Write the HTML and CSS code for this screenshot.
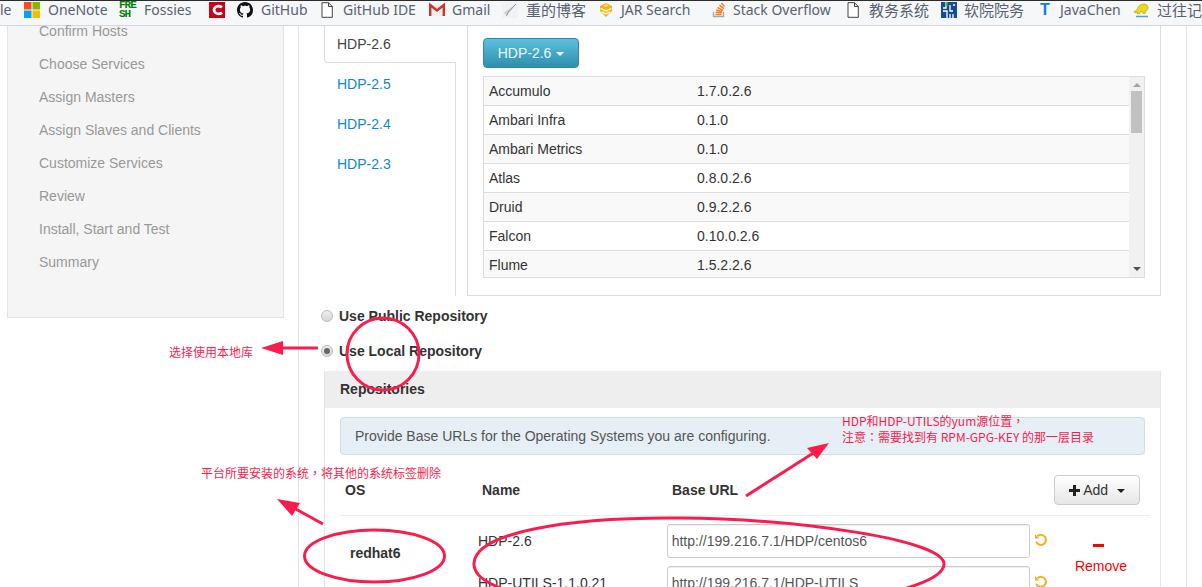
FILE: index.html
```html
<!DOCTYPE html>
<html lang="en">
<head>
    <meta name="viewport" content="width=device-width">
    <title>Select Version</title>
    <link rel="stylesheet" href="styles.css">
</head>

<body>
    <div class="bookmarks">
        <span class="mark first">le</span>
        <span class="mark m-onenote">
            <svg class="ico" viewBox="0 0 16 16"><rect width="7.5" height="7.5" fill="#f25022"/><rect x="8.5" width="7.5" height="7.5" fill="#7fba00"/><rect y="8.5" width="7.5" height="7.5" fill="#00a4ef"/><rect x="8.5" y="8.5" width="7.5" height="7.5" fill="#ffb900"/></svg>
            OneNote
        </span>
        <span class="mark m-fossies"><span class="fresh">FRE<br>SH</span>Fossies</span>
        <span class="mark m-github">
            <svg class="ico" viewBox="0 0 16 16"><rect width="16" height="16" fill="#cc0018"/><path d="M13 5.400A4.600 3.800 0 1 0 13 10.600" fill="none" stroke="#fff" stroke-width="2.800"/></svg>
            <svg class="ico" viewBox="0 0 16 16"><path d="M8 0C3.58 0 0 3.58 0 8c0 3.54 2.29 6.53 5.47 7.59.4.07.55-.17.55-.38 0-.19-.01-.82-.01-1.49-2.01.37-2.53-.49-2.69-.94-.09-.23-.48-.94-.82-1.13-.28-.15-.68-.52-.01-.53.63-.01 1.08.58 1.23.82.72 1.21 1.87.87 2.33.66.07-.52.28-.87.51-1.07-1.78-.2-3.64-.89-3.64-3.95 0-.87.31-1.59.82-2.15-.08-.2-.36-1.02.08-2.12 0 0 .67-.21 2.2.82.64-.18 1.32-.27 2-.27s1.36.09 2 .27c1.53-1.04 2.2-.82 2.2-.82.44 1.1.16 1.92.08 2.12.51.56.82 1.27.82 2.15 0 3.07-1.87 3.75-3.65 3.95.29.25.54.73.54 1.48 0 1.07-.01 1.93-.01 2.2 0 .21.15.46.55.38A8.01 8.01 0 0 0 16 8c0-4.42-3.58-8-8-8z" fill="#111"/></svg>
            GitHub
        </span>
        <span class="mark m-ide">
            <svg class="ico doc" viewBox="0 0 12 16"><path d="M1 .7h6.5L11.3 4.5V15.3H1zM7.5 .7V4.5h3.8" fill="#fff" stroke="#444" stroke-width="1"/></svg>
            GitHub IDE
        </span>
        <span class="mark m-gmail">
            <svg class="ico" viewBox="0 0 16 16"><path d="M1 2.500h14v11.500H1z" fill="#eee"/><path d="M1.200 14V3L8 8.500 14.800 3V14" fill="none" stroke="#c8372d" stroke-width="2.400"/></svg>
            Gmail
        </span>
        <span class="mark m-blog">
            <svg class="ico" viewBox="0 0 16 16"><rect width="16" height="16" fill="#f0f2f4"/><path d="M14 2 2 10.500l2.500 3.500z" fill="#c9d0d6"/><path d="M14 2 6 10.500 4.500 14" stroke="#8f9aa5" stroke-width="1" fill="none"/></svg>
            <span class="cjk">重的博客</span>
        </span>
        <span class="mark m-jar">
            <svg class="ico" viewBox="0 0 16 16"><path d="M8 1l6 3v5l-6 6-6-6V4z" fill="#f7b01c"/><path d="M2.500 6.500 8 9l5.500-2.500M4 10 8 12l4-2" fill="none" stroke="#fff3c8" stroke-width="1.500"/><path d="M5 3.500 8 2l3 1.500L8 5z" fill="#ffd968"/></svg>
            JAR Search
        </span>
        <span class="mark m-so">
            <svg class="ico" viewBox="0 0 16 16"><path d="M2.500 10v4.500h10V10" fill="none" stroke="#a8a8a8" stroke-width="1.400"/><path d="M4.500 12.600h6M4.700 10.300l6.200.5M5.200 8l6 1.400M6.500 5.500l5.500 2.900M8.500 3.200l4.500 3.500M10.500 1l3 3.600" stroke="#f48024" stroke-width="1.500" fill="none"/></svg>
            Stack Overflow
        </span>
        <span class="mark m-edu">
            <svg class="ico doc" viewBox="0 0 12 16"><path d="M1 .7h6.5L11.3 4.5V15.3H1zM7.5 .7V4.500h3.800" fill="#fff" stroke="#444" stroke-width="1"/></svg>
            <span class="cjk">教务系统</span>
        </span>
        <span class="mark m-soft">
            <svg class="ico" viewBox="0 0 16 16"><rect width="16" height="16" fill="#154c94"/><path d="M5 0v6H2M2 9h4v7M9 3v6h3M12 3h2M9 12v4M12 12v4" fill="none" stroke="#fff" stroke-width="1.300"/><rect x="4.500" width="2" height="4" fill="#5fc24a"/></svg>
            <span class="cjk">软院院务</span>
        </span>
        <span class="mark m-java"><span class="tee">T</span>JavaChen</span>
        <span class="mark m-past">
            <svg class="ico" viewBox="0 0 16 16"><path d="M1 9.500 4 8c.3-3 3-6 7-6 2.500 0 4.500 2 4 4.500-.3 1.500-1.500 2.500-2.500 2.500l-.5 2.500H10L9.500 9.500 7 10l-.5 2H4.500L4.300 10 2 11z" fill="#ecd916" stroke="#9a8c10" stroke-width=".5"/><path d="M3 14.500h12" stroke="#5b9bd0" stroke-width="1.500"/></svg>
            <span class="cjk">过往记</span>
        </span>
    </div>

    <div class="page">
        <aside class="sidebar">
            <div class="step">Confirm Hosts</div>
            <div class="step">Choose Services</div>
            <div class="step">Assign Masters</div>
            <div class="step">Assign Slaves and Clients</div>
            <div class="step">Customize Services</div>
            <div class="step">Review</div>
            <div class="step">Install, Start and Test</div>
            <div class="step">Summary</div>
        </aside>

        <main class="wizard">
            <div class="stack-tabs">
                <nav class="tabs">
                    <div class="tab active">HDP-2.6</div>
                    <div class="tab-rest">
                        <a class="tab">HDP-2.5</a>
                        <a class="tab">HDP-2.4</a>
                        <a class="tab">HDP-2.3</a>
                    </div>
                </nav>
                <section class="tab-content">
                    <button class="btn-version">HDP-2.6 <span class="caret"></span></button>
                    <div class="services">
                        <div class="service-rows">
                            <div class="service"><span class="svc-name">Accumulo</span><span>1.7.0.2.6</span></div>
                            <div class="service"><span class="svc-name">Ambari Infra</span><span>0.1.0</span></div>
                            <div class="service"><span class="svc-name">Ambari Metrics</span><span>0.1.0</span></div>
                            <div class="service"><span class="svc-name">Atlas</span><span>0.8.0.2.6</span></div>
                            <div class="service"><span class="svc-name">Druid</span><span>0.9.2.2.6</span></div>
                            <div class="service"><span class="svc-name">Falcon</span><span>0.10.0.2.6</span></div>
                            <div class="service"><span class="svc-name">Flume</span><span>1.5.2.2.6</span></div>
                        </div>
                        <div class="scrollbar">
                            <span class="arrow-up"></span>
                            <span class="thumb"></span>
                            <span class="arrow-down"></span>
                        </div>
                    </div>
                </section>
            </div>

            <label class="radio-line"><span class="radio"></span>Use Public Repository</label>
            <label class="radio-line"><span class="radio checked"></span>Use Local Repository</label>

            <section class="panel">
                <h2 class="panel-head">Repositories</h2>
                <div class="panel-body">
                    <div class="alert">Provide Base URLs for the Operating Systems you are configuring.</div>
                    <div class="repo-head">
                        <span class="col-os">OS</span>
                        <span class="col-name">Name</span>
                        <span class="col-url">Base URL</span>
                        <button class="btn-add">
                            <svg class="plus" viewBox="0 0 11 11"><path d="M4 0h3v4h4v3H7v4H4V7H0V4h4z" fill="#222"/></svg>
                            Add <span class="caret dark"></span>
                        </button>
                    </div>
                    <div class="repo-row">
                        <div class="os-name">redhat6</div>
                        <div class="repo-list">
                            <div class="repo">
                                <span class="repo-name">HDP-2.6</span>
                                <input class="repo-url" type="text" value="http://199.216.7.1/HDP/centos6">
                                <svg class="undo" viewBox="0 0 14 14"><path d="M3.500 3.200A5 5 0 1 1 2.200 8.500" fill="none" stroke="#f0ad1e" stroke-width="2"/><path d="M1 1.200v4.300h4.300z" fill="#f0ad1e"/></svg>
                            </div>
                            <div class="repo">
                                <span class="repo-name">HDP-UTILS-1.1.0.21</span>
                                <input class="repo-url" type="text" value="http://199.216.7.1/HDP-UTILS">
                                <svg class="undo" viewBox="0 0 14 14"><path d="M3.500 3.200A5 5 0 1 1 2.200 8.500" fill="none" stroke="#f0ad1e" stroke-width="2"/><path d="M1 1.200v4.300h4.300z" fill="#f0ad1e"/></svg>
                            </div>
                        </div>
                        <div class="remove"><span class="minus"></span>Remove</div>
                    </div>
                </div>
            </section>
        </main>
    </div>

    <!-- hand drawn notes on top of the screenshot -->
    <svg class="scribbles" viewBox="0 0 1202 587">
        <g fill="none" stroke="#fb1c4e" stroke-width="3">
            <ellipse cx="383" cy="354" rx="36" ry="36"/>
            <ellipse cx="374.500" cy="556" rx="70" ry="26"/>
            <path d="M474 563C476 534 560 517 680 518C800 519 944 540 944 564C944 590 820 612 700 610C580 608 472 596 474 563z"/>
            <path d="M318 348H278"/>
            <path d="M323 524L292 507"/>
            <path d="M746 496L815 452"/>
        </g>
        <g fill="#fb1c4e">
            <path d="M261 348L283 341V355z"/>
            <path d="M277 499L300 503L292 516z"/>
            <path d="M829 443L807 448L817 459z"/>
        </g>
    </svg>
    <div class="note note-local">选择使用本地库</div>
    <div class="note note-os">平台所要安装的系统，将其他的系统标签删除</div>
    <div class="note note-url">HDP和HDP-UTILS的yum源位置，<br>注意：需要找到有 RPM-GPG-KEY 的那一层目录</div>
</body>
</html>
```

FILE: styles.css
```css
html, body {
    background-color: #fff;
}
body {
    margin: 0;
    height: 587px;
    overflow: hidden;
    position: relative;
    font-family: "Liberation Sans", "Noto Sans CJK SC", sans-serif;
    font-size: 14px;
    color: #333;
}

/* bookmarks bar */
.bookmarks {
    height: 17px;
    padding-bottom: 7px;
    background-color: #f6f7f9;
    border-top: 1px solid #2c2c2c;
    border-bottom: 1px solid #d5d7de;
    display: flex;
    align-items: center;
    white-space: nowrap;
    overflow: hidden;
    font-family: "Noto Sans", "Noto Sans CJK SC", sans-serif;
    font-size: 14px;
    color: #5a6270;
}
.mark {
    display: flex;
    align-items: center;
    gap: 8px;
    flex: none;
}
.mark.first { width: 24px; }
.m-onenote { width: 95px; }
.m-fossies { width: 90px; }
.m-github { width: 112px; }
.m-ide { width: 108px; gap: 10px; }
.m-gmail { width: 73px; gap: 7px; }
.m-blog { width: 96px; }
.m-jar { width: 113px; gap: 7px; }
.m-so { width: 136px; gap: 6px; }
.m-edu { width: 94px; gap: 10px; }
.m-soft { width: 99px; gap: 7px; }
.m-java { width: 93px; }
.m-past { width: 70px; }
.cjk { font-size: 15px; }
.ico {
    width: 16px;
    height: 16px;
    flex: none;
}
.ico.doc { width: 12px; }
.m-github .ico:first-child { margin-right: 4px; }
.fresh {
    width: 17px;
    font-family: "Liberation Mono", monospace;
    font-weight: bold;
    font-size: 11px;
    line-height: 9px;
    color: #008000;
    letter-spacing: -1px;
    text-align: left;
}
.tee {
    width: 12px;
    color: #0a7cf0;
    font-family: "Liberation Sans", sans-serif;
    font-weight: bold;
    font-size: 16px;
}

/* page */
.page {
    display: flex;
    align-items: flex-start;
    padding-left: 7px;
}
.sidebar {
    width: 275px;
    height: 291px;
    flex: none;
    background-color: #f5f5f5;
    border: 1px solid #e3e3e3;
    border-top: 0;
    box-sizing: content-box;
}
.step {
    height: 33px;
    line-height: 11px;
    padding-left: 31px;
    color: #999;
}
.wizard {
    margin-left: 14px;
    width: 862px;
    height: 561px;
    padding-left: 25px;
    border-left: 1px solid #e3e3e3;
    border-right: 1px solid #e3e3e3;
    flex: none;
}

/* version tabs */
.stack-tabs {
    display: flex;
    height: 270px;
}
.tabs {
    width: 132px;
    flex: none;
    display: flex;
    flex-direction: column;
}
.tab {
    display: block;
    height: 40px;
    line-height: 39px;
    padding-left: 13px;
    color: #0e88cf;
}
.tab.active {
    height: 36px;
    line-height: 36px;
    color: #444;
    border: 1px solid #ddd;
    border-top: 0;
    border-right: 0;
    border-bottom-left-radius: 4px;
    padding-left: 12px;
}
.tab-rest {
    flex: 1;
    border-right: 1px solid #ddd;
    padding-top: 2px;
}
.tab-content {
    margin-left: 11px;
    width: 694px;
    height: 270px;
    border: 1px solid #ddd;
    border-top: 0;
    padding: 12px 15px 0;
    box-sizing: border-box;
}
.btn-version {
    display: block;
    width: 96px;
    height: 30px;
    padding: 0;
    font: inherit;
    color: #eef8fb;
    background: linear-gradient(#5bc0de, #2f8fad);
    border: 1px solid #2f87a3;
    border-radius: 4px;
}
.caret {
    display: inline-block;
    vertical-align: middle;
    margin-left: 1px;
    border-top: 4px solid #fff;
    border-left: 4px solid transparent;
    border-right: 4px solid transparent;
}
.caret.dark {
    border-top-color: #222;
    margin-left: 5px;
}
.services {
    margin-top: 8px;
    width: 662px;
    height: 202px;
    border: 1px solid #ddd;
    display: flex;
    overflow: hidden;
    box-sizing: border-box;
}
.service-rows {
    flex: 1;
}
.service {
    display: flex;
    height: 28px;
    line-height: 28px;
    border-bottom: 1px solid #ddd;
    padding-left: 5px;
}
.service:nth-child(odd) {
    background-color: #f9f9f9;
}
.svc-name {
    width: 208px;
}
.scrollbar {
    width: 15px;
    flex: none;
    background-color: #f1f1f1;
    display: flex;
    flex-direction: column;
    align-items: center;
}
.arrow-up {
    margin-top: 6px;
    border-bottom: 4px solid #a3a3a3;
    border-left: 4px solid transparent;
    border-right: 4px solid transparent;
}
.thumb {
    margin-top: 4px;
    width: 11px;
    height: 42px;
    background-color: #c1c1c1;
}
.arrow-down {
    margin-top: auto;
    margin-bottom: 6px;
    border-top: 4px solid #505050;
    border-left: 4px solid transparent;
    border-right: 4px solid transparent;
}

/* repository choice */
.radio-line {
    display: flex;
    align-items: center;
    height: 35px;
    margin-left: -3px;
    font-weight: bold;
}
.radio-line:first-of-type {
    margin-top: 2px;
}
.radio {
    width: 10px;
    height: 10px;
    margin-right: 6px;
    border: 1px solid #bbb;
    border-radius: 50%;
    background: linear-gradient(#eee, #d6d6d6);
    display: flex;
    align-items: center;
    justify-content: center;
}
.radio.checked::after {
    content: "";
    width: 6px;
    height: 6px;
    border-radius: 50%;
    background-color: #666;
}

/* repositories panel */
.panel {
    margin-top: 3px;
    width: 837px;
    height: 300px;
    border-left: 1px solid #e3e3e3;
    border-right: 1px solid #e3e3e3;
    box-sizing: border-box;
}
.panel-head {
    margin: 0;
    height: 37px;
    line-height: 37px;
    padding-left: 15px;
    font-size: 14px;
    background-color: #eee;
}
.panel-body {
    padding: 9px 10px 0 15px;
}
.alert {
    width: 805px;
    height: 38px;
    line-height: 36px;
    padding-left: 14px;
    box-sizing: border-box;
    color: #555;
    background-color: #e5eff5;
    border: 1px solid #cfdfe6;
    border-radius: 4px;
}
.repo-head {
    display: flex;
    align-items: center;
    padding: 20px 0 10px 5px;
    border-bottom: 1px solid #eee;
    font-weight: bold;
}
.col-os { width: 137px; }
.col-name { width: 190px; }
.col-url { width: 382px; }
.btn-add {
    width: 86px;
    height: 30px;
    padding: 0;
    font: inherit;
    font-weight: normal;
    color: #333;
    background: linear-gradient(#fff, #e6e6e6);
    border: 1px solid #ccc;
    border-radius: 4px;
}
.plus {
    width: 11px;
    height: 11px;
    vertical-align: -1px;
}
.repo-row {
    display: flex;
    padding-top: 8px;
}
.os-name {
    width: 128px;
    padding: 21px 0 0 10px;
    font-weight: bold;
}
.repo-list {
    width: 570px;
    flex: none;
}
.repo {
    display: flex;
    align-items: center;
    height: 34px;
    margin-bottom: 8px;
}
.repo-name {
    width: 189px;
    padding-bottom: 1px;
    white-space: nowrap;
}
.repo-url {
    width: 364px;
    height: 34px;
    padding: 0 4px;
    box-sizing: border-box;
    font: inherit;
    color: #555;
    border: 1px solid #ccc;
    border-radius: 3px;
    box-shadow: inset 0 1px 1px rgba(0,0,0,.07);
}
.undo {
    width: 14px;
    height: 14px;
    margin: -2px 0 0 4px;
    flex: none;
}
.remove {
    width: 60px;
    margin-left: 23px;
    padding-top: 20px;
    color: #f00;
    text-align: center;
}
.minus {
    display: block;
    width: 11px;
    height: 3px;
    margin: 0 0 11px 22px;
    background-color: #f00;
}

/* notes drawn over the page */
.scribbles {
    position: absolute;
    left: 0;
    top: 0;
    width: 1202px;
    height: 587px;
    pointer-events: none;
}
.note {
    position: absolute;
    font-family: "Noto Sans CJK TC", sans-serif;
    font-size: 12px;
    line-height: 16px;
    color: #fb1c4e;
    white-space: nowrap;
}
.note-local { left: 169px; top: 344px; }
.note-os { left: 201px; top: 465px; }
.note-url { left: 842px; top: 413px; }
```
